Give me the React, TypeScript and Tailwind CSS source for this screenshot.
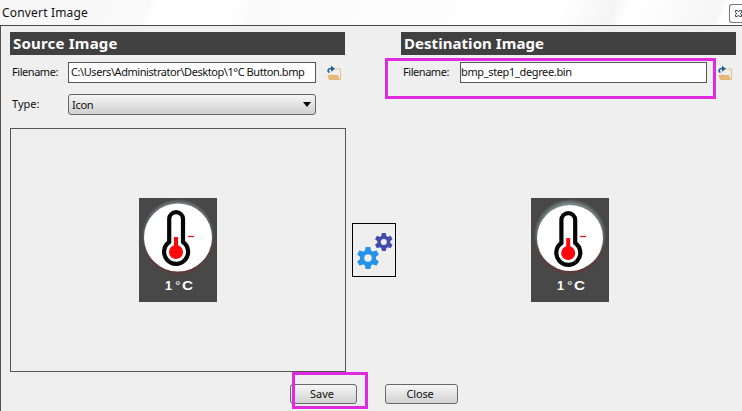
import React from "react";

function FolderIcon() {
  return (
    <svg width="16" height="16" viewBox="0 0 16 16" className="shrink-0">
      <path d="M8 4h5.5V15" fill="none" stroke="#dfc18c" strokeWidth="1" />
      <path d="M.5 10h3l1-1 1 1H11l2 5H2z" fill="#e3b878" />
      <path d="M2.5 7.5C0 6 1 3.5 4 3.5h2" fill="none" stroke="#245b94" strokeWidth="1.6" />
      <path d="M4 .8 8 3.8 4 6.8z" fill="#245b94" />
    </svg>
  );
}

function Thermometer({ small = false }: { small?: boolean }) {
  return (
    <svg width="78" height="104" viewBox="0 0 78 104" className="shrink-0">
      <defs>
        <radialGradient id="halo" cx="50%" cy="50%" r="50%">
          <stop offset="87%" stopColor="#788586" />
          <stop offset="100%" stopColor="#484848" />
        </radialGradient>
        <radialGradient id="redHalo" cx="50%" cy="50%" r="50%">
          <stop offset="90%" stopColor="#603a3a" />
          <stop offset="100%" stopColor="#484848" />
        </radialGradient>
      </defs>
      <rect width="78" height="104" fill="#484848" />
      <circle cx="39" cy="41" r="37" fill="url(#redHalo)" />
      <circle cx="39" cy="37" r="36" fill="url(#halo)" />
      <circle cx="39" cy={small ? 40 : 39.5} r={small ? 33 : 34} fill="#fff" />
      <g transform={small ? "translate(0.2 1)" : "translate(0 0)"}>
        <path d="M30.2 44V21a6.9 6.9 0 0 1 13.8 0V44a12 12 0 1 1-13.8 0z" fill="#fff" stroke="#050505" strokeWidth="4.2" />
        <circle cx="37" cy="54" r="7" fill="#fa080c" />
        <path d="M35 39h4v11h-4z" fill="#fa080c" />
      </g>
      <path d="M49 38.5h6" stroke="#ef1118" strokeWidth="1.3" />
      <g fill="#fff" fontFamily="'Liberation Sans', sans-serif">
        <text x="26" y="92" fontSize="12.5" fontWeight="bold" textLength="7" lengthAdjust="spacingAndGlyphs">1</text>
        <text x="36" y="93" fontSize="14">°</text>
        <text x="43" y="92" fontSize="12.5" fontWeight="bold" textLength="11" lengthAdjust="spacingAndGlyphs">C</text>
      </g>
    </svg>
  );
}

function Gear({ x, y, scale, color }: { x: number; y: number; scale: number; color: string }) {
  return (
    <g transform={`translate(${x} ${y}) scale(${scale})`} fill={color}>
      {[0, 60, 120, 180, 240, 300].map((a) => (
        <path key={a} transform={`rotate(${a})`} d="M-3.2-6 -2.4-11h4.8l.8 5z" />
      ))}
      <path fillRule="evenodd" d="M0-8a8 8 0 1 1 0 16a8 8 0 1 1 0-16zM0-3.7a3.7 3.7 0 1 0 0 7.4a3.7 3.7 0 1 0 0-7.4z" />
    </g>
  );
}

function Heading({ children }: { children: React.ReactNode }) {
  return <h2 className="h-[23px] bg-[#404040] pl-[3px] text-[15px] leading-[23px] font-bold text-white">{children}</h2>;
}

export default function App() {
  return (
    <div className="relative h-[411px] w-[742px] overflow-hidden bg-[#efefef] font-['Noto_Sans',sans-serif] text-[11px] whitespace-nowrap text-[#111]">
      <header className="flex h-[26px] justify-between border-b border-[#484848] bg-[linear-gradient(115deg,#f6f6f6_0%,#fafafa_20%,#fff_21%,#fff_31%,#fafafa_34%,#fdfdfd_55%,#fff_75%,#f5f5f5_82%,#fff_84%,#f6f6f6_96%,#fff_97%)]">
        <span className="pl-[2px] text-[12px] leading-[26px] tracking-[0.18px]">Convert Image</span>
        <div className="mt-1 flex h-[19px] w-[13px] items-center rounded-l-[3px] border border-r-0 border-[#777] bg-white pl-[5px]">
          <svg width="7" height="7" viewBox="0 0 7 7" className="shrink-0">
            <path d="M.5.5h2l1 1.5 1-1.5h2v2L5 3.5l1.5 1v2h-2l-1-1.5-1 1.5h-2v-2L2 3.5.5 2.5z" fill="#fff" stroke="#464b55" />
          </svg>
        </div>
      </header>

      <main className="flex h-[346px] border-l border-[#505050] pt-[6px] pl-[9px]">
        <section className="flex w-[336px] flex-col">
          <div className="w-[335px]"><Heading><span className="tracking-[0.2px]">Source Image</span></Heading></div>
          <div className="mt-[7px] flex h-[21px] items-center">
            <label className="w-[58px] pl-[2px] tracking-[-0.45px]">Filename:</label>
            <div className="h-[21px] w-[248px] shrink-0 border border-[#555] bg-white pl-[2px] leading-[17px] tracking-[-0.43px]"><span>C:\Users\Administrator\Desktop\1°C Button.bmp</span></div>
            <div className="ml-[11px]"><FolderIcon /></div>
          </div>
          <div className="mt-[11px] flex h-[21px] items-center">
            <label className="w-[58px] pl-[2px]">Type:</label>
            <div className="flex h-[21px] w-[248px] items-center justify-between rounded-[3px] border border-[#666] bg-linear-to-b from-[#f5f5f5] to-[#d0d0d0] pr-[4px] pl-[3px]">
              <span className="pt-px tracking-[-0.3px]">Icon</span>
              <svg width="8" height="5" viewBox="0 0 8 5"><path d="M0 0h8L4 5z" fill="#000" /></svg>
            </div>
          </div>
          <div className="mt-[13px] h-[244px] border border-[#555] pt-[69px] pl-[128px]"><Thermometer /></div>
        </section>

        <div className="ml-[6px] flex w-[44px] flex-col pt-[191px]">
          <button className="h-[54px] border border-black">
            <svg width="42" height="52" viewBox="0 0 42 52">
              <Gear x={30.8} y={18} scale={0.82} color="#454bac" />
              <Gear x={15} y={34} scale={1.01} color="#2593e8" />
            </svg>
          </button>
        </div>

        <section className="ml-[5px] flex w-[335px] flex-col">
          <Heading><span className="tracking-[0.05px]">Destination Image</span></Heading>
          <div className="mt-[7px] flex h-[21px] items-center">
            <label className="w-[59px] pl-[2px] tracking-[-0.45px]">Filename:</label>
            <div className="h-[21px] w-[247px] shrink-0 border border-[#555] bg-white leading-[17px] tracking-[-0.36px]"><span>bmp_step1_degree.bin</span></div>
            <div className="ml-[11px]"><FolderIcon /></div>
          </div>
          <div className="pt-[115px] pl-[130px]"><Thermometer small /></div>
        </section>
      </main>

      <footer className="flex gap-[28px] border-l border-[#505050] pt-[12px] pb-[20px] pl-[289px]">
        <button className="h-[20px] w-[67px] rounded-[3px] border border-[#686868] bg-linear-to-b from-[#f6f6f6] to-[#d2d2d2] pr-[3px] leading-[18px]">Save</button>
        <button className="h-[20px] w-[73px] rounded-[3px] border border-[#686868] bg-linear-to-b from-[#f6f6f6] to-[#d2d2d2] pr-[3px] leading-[18px] tracking-[-0.2px]">Close</button>
      </footer>

      <div className="pointer-events-none absolute top-[58px] left-[385px] h-[41px] w-[331px] border-3 border-[#e02ade]" />
      <div className="pointer-events-none absolute top-[372px] left-[292px] h-[37px] w-[76px] border-3 border-[#e02ade]" />
    </div>
  );
}
